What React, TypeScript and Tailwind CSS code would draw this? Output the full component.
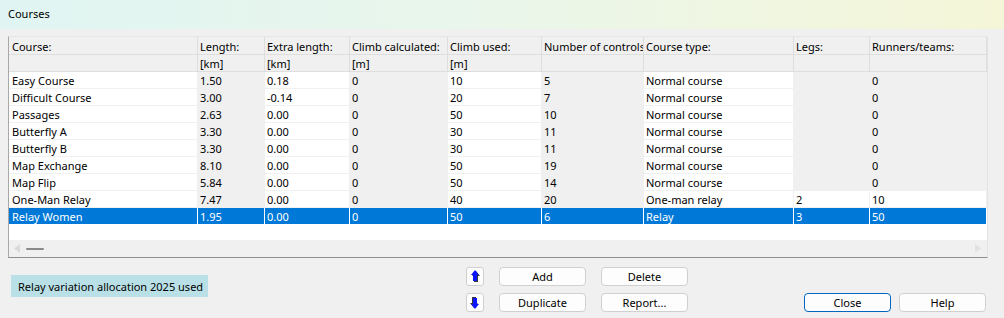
import React from "react";

type Row = {
  name: string;
  length: string;
  extra: string;
  climbCalc: string;
  climbUsed: string;
  controls: string;
  type: string;
  legs: string;
  runners: string;
  relay?: boolean;
  selected?: boolean;
};

const rows: Row[] = [
  { name: "Easy Course", length: "1.50", extra: "0.18", climbCalc: "0", climbUsed: "10", controls: "5", type: "Normal course", legs: "", runners: "0" },
  { name: "Difficult Course", length: "3.00", extra: "-0.14", climbCalc: "0", climbUsed: "20", controls: "7", type: "Normal course", legs: "", runners: "0" },
  { name: "Passages", length: "2.63", extra: "0.00", climbCalc: "0", climbUsed: "50", controls: "10", type: "Normal course", legs: "", runners: "0" },
  { name: "Butterfly A", length: "3.30", extra: "0.00", climbCalc: "0", climbUsed: "30", controls: "11", type: "Normal course", legs: "", runners: "0" },
  { name: "Butterfly B", length: "3.30", extra: "0.00", climbCalc: "0", climbUsed: "30", controls: "11", type: "Normal course", legs: "", runners: "0" },
  { name: "Map Exchange", length: "8.10", extra: "0.00", climbCalc: "0", climbUsed: "50", controls: "19", type: "Normal course", legs: "", runners: "0" },
  { name: "Map Flip", length: "5.84", extra: "0.00", climbCalc: "0", climbUsed: "50", controls: "14", type: "Normal course", legs: "", runners: "0" },
  { name: "One-Man Relay", length: "7.47", extra: "0.00", climbCalc: "0", climbUsed: "40", controls: "20", type: "One-man relay", legs: "2", runners: "10", relay: true },
  { name: "Relay Women", length: "1.95", extra: "0.00", climbCalc: "0", climbUsed: "50", controls: "6", type: "Relay", legs: "3", runners: "50", relay: true, selected: true },
];

// column widths incl. the 1px right grid line
const widths = ["w-[189px]", "w-[67px]", "w-[85px]", "w-[98px]", "w-[94px]", "w-[102px]", "w-[150px]", "w-[76px]", "w-[117px]"];

const headers = ["Course:", "Length:", "Extra length:", "Climb calculated:", "Climb used:", "Number of controls", "Course type:", "Legs:", "Runners/teams:"];
const units = ["", "[km]", "[km]", "[m]", "[m]", "", "", "", ""];

const Arrow = ({ down = false }: { down?: boolean }) => (
  <svg width="10" height="13" viewBox="0 0 10 13" className={down ? "rotate-180" : ""}>
    <polygon points="6,1 10,6 8,6 8,12 4,12 4,6 2,6" fill="#3a3a3a" />
    <polygon points="5,0 9,5 7,5 7,11 3,11 3,5 1,5" fill="#0a14ff" />
  </svg>
);

const Button = ({ label, focused = false }: { label: string; focused?: boolean }) => (
  <button
    className={`w-[87px] h-[19px] rounded-[4px] bg-[#fdfdfd] text-[11px] leading-[17px] text-black border ${
      focused ? "border-[#0067c0]" : "border-[#d0d0d0]"
    }`}
  >
    {label}
  </button>
);

export default function App() {
  return (
    <div className="w-[1004px] h-[318px] bg-[#f0f0f0] font-['Noto_Sans','Liberation_Sans',sans-serif] text-[11px] text-black overflow-hidden">
      {/* Title bar */}
      <div className="h-[29px] flex items-center pl-[8px] bg-gradient-to-r from-[#e0f5f3] via-[#eaf6ea] to-[#f5f6d8]">
        Courses
      </div>

      {/* Grid */}
      <div className="pt-[7px] pl-[8px]">
        <div className="w-[980px] border-t border-r border-t-[#e6e6e6] border-r-[#e3e3e3] border-l border-l-[#a8a8a8] border-b border-b-[#8e8e8e] bg-white">
          <div className="flex h-[18px] bg-[#f0f0f0]">
            {headers.map((h, i) => (
              <div key={i} className={`${widths[i]} shrink-0 border-r border-b border-[#dedede] ${i === 0 ? "pl-[3px]" : "pl-[2px]"} leading-[19px] whitespace-nowrap overflow-hidden`}>
                {h}
              </div>
            ))}
          </div>
          <div className="flex h-[17px] bg-[#f0f0f0]">
            {units.map((u, i) => (
              <div key={i} className={`${widths[i]} shrink-0 border-r border-b border-[#dedede] ${i === 0 ? "pl-[3px]" : "pl-[2px]"} leading-[18px]`}>
                {u}
              </div>
            ))}
          </div>
          {rows.map((r) => {
            const cells = [r.name, r.length, r.extra, r.climbCalc, r.climbUsed, r.controls, r.type, r.legs, r.runners];
            const gray = [false, true, false, true, false, true, false, !r.relay, !r.relay];
            return (
              <div key={r.name} className="flex h-[17px]">
                {cells.map((c, i) => (
                  <div
                    key={i}
                    className={`${widths[i]} shrink-0 border-b border-r ${i === 0 ? "pl-[3px]" : "pl-[2px]"} leading-[18px] whitespace-nowrap overflow-hidden ${
                      r.selected
                        ? "bg-[#0078d7] text-white border-white"
                        : gray[i]
                        ? "bg-[#f0f0f0] border-[#f0f0f0]"
                        : "bg-white border-[#f0f0f0]"
                    }`}
                  >
                    {c}
                  </div>
                ))}
              </div>
            );
          })}
          <div className="h-[15px] bg-white" />
          {/* Horizontal scrollbar */}
          <div className="h-[17px] bg-[#f0f0f0] flex items-center">
            <svg width="8" height="9" viewBox="0 0 8 9" className="ml-[4px]">
              <polygon points="7,0 7,9 1,4.5" fill="#dadada" />
            </svg>
            <div className="ml-[5px] w-[18px] h-[2px] rounded-full bg-[#8a8a8a]" />
            <div className="flex-1" />
            <svg width="8" height="9" viewBox="0 0 8 9" className="mr-[5px]">
              <polygon points="1,0 1,9 7,4.5" fill="#e2e2e2" />
            </svg>
          </div>
        </div>
      </div>

      {/* Bottom controls */}
      <div className="flex pt-[9px] pl-[8px]">
        <div className="w-[458px]">
          <div className="ml-[3px] mt-[8px] w-[197px] h-[22px] bg-[#b9e0e7] pl-[7px] leading-[23px] whitespace-nowrap">
            Relay variation allocation 2025 used
          </div>
        </div>
        <div className="flex flex-col gap-[7px]">
          <button className="w-[18px] h-[19px] rounded-[3px] bg-[#fdfdfd] border border-[#d0d0d0] flex items-center justify-center">
            <Arrow />
          </button>
          <button className="w-[18px] h-[19px] rounded-[3px] bg-[#fdfdfd] border border-[#d0d0d0] flex items-center justify-center">
            <Arrow down />
          </button>
        </div>
        <div className="ml-[15px] grid grid-cols-[87px_87px] gap-x-[15px] gap-y-[7px]">
          <Button label="Add" />
          <Button label="Delete" />
          <Button label="Duplicate" />
          <Button label="Report..." />
        </div>
        <div className="ml-[116px] flex items-end gap-[8px]">
          <Button label="Close" focused />
          <Button label="Help" />
        </div>
      </div>
    </div>
  );
}
